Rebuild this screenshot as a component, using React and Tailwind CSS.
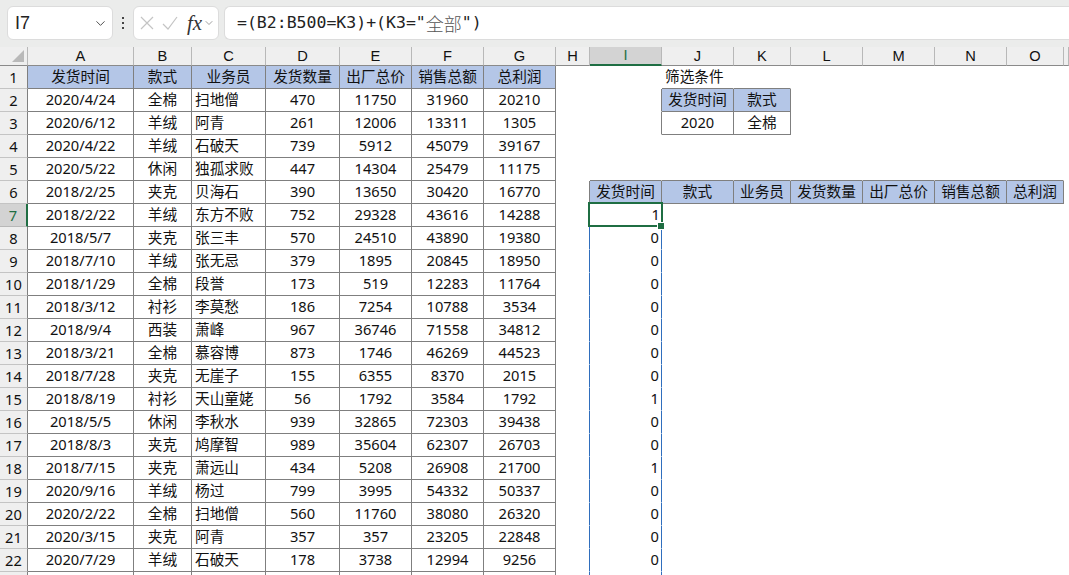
import React from 'react';
import { ChevronDown } from 'lucide-react';

const COLUMNS = ['A', 'B', 'C', 'D', 'E', 'F', 'G', 'H', 'I', 'J', 'K', 'L', 'M', 'N', 'O', ''];
const HEADERS = ['发货时间', '款式', '业务员', '发货数量', '出厂总价', '销售总额', '总利润'];

const ROWS = [
  ['2020/4/24', '全棉', '扫地僧', 470, 11750, 31960, 20210],
  ['2020/6/12', '羊绒', '阿青', 261, 12006, 13311, 1305],
  ['2020/4/22', '羊绒', '石破天', 739, 5912, 45079, 39167],
  ['2020/5/22', '休闲', '独孤求败', 447, 14304, 25479, 11175],
  ['2018/2/25', '夹克', '贝海石', 390, 13650, 30420, 16770],
  ['2018/2/22', '羊绒', '东方不败', 752, 29328, 43616, 14288],
  ['2018/5/7', '夹克', '张三丰', 570, 24510, 43890, 19380],
  ['2018/7/10', '羊绒', '张无忌', 379, 1895, 20845, 18950],
  ['2018/1/29', '全棉', '段誉', 173, 519, 12283, 11764],
  ['2018/3/12', '衬衫', '李莫愁', 186, 7254, 10788, 3534],
  ['2018/9/4', '西装', '萧峰', 967, 36746, 71558, 34812],
  ['2018/3/21', '全棉', '慕容博', 873, 1746, 46269, 44523],
  ['2018/7/28', '夹克', '无崖子', 155, 6355, 8370, 2015],
  ['2018/8/19', '衬衫', '天山童姥', 56, 1792, 3584, 1792],
  ['2018/5/5', '休闲', '李秋水', 939, 32865, 72303, 39438],
  ['2018/8/3', '夹克', '鸠摩智', 989, 35604, 62307, 26703],
  ['2018/7/15', '夹克', '萧远山', 434, 5208, 26908, 21700],
  ['2020/9/16', '羊绒', '杨过', 799, 3995, 54332, 50337],
  ['2020/2/22', '全棉', '扫地僧', 560, 11760, 38080, 26320],
  ['2020/3/15', '夹克', '阿青', 357, 357, 23205, 22848],
  ['2020/7/29', '羊绒', '石破天', 178, 3738, 12994, 9256],
];

// result of the array formula in column I, starting at row 7
const RESULTS = [1, 0, 0, 0, 0, 0, 0, 0, 1, 0, 0, 1, 0, 0, 0, 0];

const Cell = ({ children, right, bottom, fill, align = 'center' }) => {
  const alignClass = align === 'left' ? 'justify-start pl-[3px]' : align === 'right' ? 'justify-end pr-[2px]' : 'justify-center';
  return (
    <div
      className={`flex items-center whitespace-nowrap border-r border-b pb-[2px] ${alignClass} ${fill ? 'bg-[#b4c6e7]' : 'bg-white'} ${
        right === 'gray' ? 'border-r-[#7f7f7f]' : right === 'blue' ? 'border-r-[#2f6ebd]' : 'border-r-transparent'
      } ${bottom ? 'border-b-[#7f7f7f]' : 'border-b-transparent'}`}
    >
      {children}
    </div>
  );
};

// border and content of one sheet cell; row is 1-based, col 0 is A
const cellFor = (row, col) => {
  const props = {};
  if (col <= 6) {
    props.right = 'gray';
    props.bottom = true;
    if (row === 1) {
      props.fill = true;
      props.children = HEADERS[col];
    } else if (ROWS[row - 2]) {
      props.children = ROWS[row - 2][col];
      if (col === 2) props.align = 'left';
    }
    return props;
  }
  if (row === 1 && col === 9) {
    props.align = 'left';
    props.children = '筛选条件';
  }
  if (row === 1 && (col === 9 || col === 10)) props.bottom = true;
  if ((row === 2 || row === 3) && col === 8) props.right = 'gray';
  if ((row === 2 || row === 3) && (col === 9 || col === 10)) {
    props.right = 'gray';
    props.bottom = true;
    if (row === 2) {
      props.fill = true;
      props.children = col === 9 ? '发货时间' : '款式';
    } else {
      props.children = col === 9 ? 2020 : '全棉';
    }
  }
  if (row === 5 && col >= 8 && col <= 14) props.bottom = true;
  if (row === 6 && col === 7) props.right = 'gray';
  if (row === 6 && col >= 8 && col <= 14) {
    props.right = 'gray';
    props.bottom = true;
    props.fill = true;
    props.children = HEADERS[col - 8];
  }
  if (row >= 7 && (col === 7 || col === 8)) props.right = 'blue';
  if (row >= 7 && col === 8) {
    props.align = 'right';
    props.children = RESULTS[row - 7];
  }
  return props;
};

const FormulaBar = () => (
  <div className="flex h-[47px] shrink-0 items-start bg-[#ebeceb] pl-[7px] pt-[6px]">
    {/* Name box */}
    <div className="flex h-[34px] w-[106px] items-center justify-between rounded-[6px] border border-[#dcdcdc] bg-white pl-[7px] pr-[4px] font-['Liberation_Sans',sans-serif] text-[18px] text-[#222]">
      <span>I7</span>
      <ChevronDown size={15} strokeWidth={1.5} className="text-[#444]" />
    </div>
    <div className="flex h-[34px] w-[20px] flex-col items-center justify-center gap-[3px]">
      <span className="h-[2px] w-[2px] bg-[#444]" />
      <span className="h-[2px] w-[2px] bg-[#444]" />
      <span className="h-[2px] w-[2px] bg-[#444]" />
    </div>
    {/* Cancel, enter, function */}
    <div className="flex h-[34px] w-[86px] items-center rounded-[6px] border border-[#dcdcdc] bg-white pl-[6px]">
      <svg width="14" height="14" viewBox="0 0 14 14" fill="none" stroke="#c4c4c4" strokeWidth="1.2">
        <path d="M1 1l12 12M13 1L1 13" />
      </svg>
      <svg width="16" height="14" viewBox="0 0 16 14" fill="none" stroke="#c4c4c4" strokeWidth="1.2" className="ml-[8px]">
        <path d="M1 8l5 5L15 1" />
      </svg>
      <span className="ml-[9px] font-['Liberation_Serif',serif] text-[21px] italic leading-none text-[#333]">fx</span>
      <ChevronDown size={12} strokeWidth={1.4} className="ml-[1px] text-[#777]" />
    </div>
    {/* Formula */}
    <div className="ml-[5px] flex h-[34px] flex-1 items-center rounded-l-[6px] border border-r-0 border-[#dcdcdc] bg-white pl-[12px] font-['DejaVu_Sans_Mono','Noto_Sans_CJK_SC',monospace] text-[16.5px] text-[#222]">
      =(B2:B500=K3)+(K3="<span className="font-['Noto_Sans_CJK_SC',sans-serif] text-[18px] font-light text-[#555]">全部</span>")
    </div>
  </div>
);

export default function App() {
  const rowNumbers = Array.from({ length: 23 }, (_, i) => i + 1);

  return (
    <div className="flex h-screen flex-col overflow-hidden bg-white font-['Noto_Sans','Noto_Sans_CJK_SC',sans-serif] text-[14.67px] leading-none text-[#111]">
      <FormulaBar />

      {/* Sheet */}
      <div className="grid grid-cols-[28px_106px_58px_74px_74px_72px_72px_72px_34px_72px_72px_57px_72px_72px_72px_57px_1fr] grid-rows-[19px] auto-rows-[23px]">
        {/* Column headers */}
        <div className="flex items-end justify-end border-r border-b border-r-[#b8b8b8] border-b-[#8a8a8a] bg-[#efefef] pb-[3px] pr-[3px]">
          <svg width="12" height="12" viewBox="0 0 12 12">
            <path d="M12 0v12H0z" fill="#b9b9b9" />
          </svg>
        </div>
        {COLUMNS.map((col, i) =>
          col === 'I' ? (
            <div key={i} className="flex items-center justify-center border-r border-b-2 border-r-[#b8b8b8] border-b-[#1f6e43] bg-[#d3d3d3] font-['Liberation_Sans',sans-serif] text-[#1f6e43]">
              {col}
            </div>
          ) : (
            <div key={i} className="flex items-center justify-center border-r border-b border-r-[#b8b8b8] border-b-[#8a8a8a] bg-[#efefef] font-['Liberation_Sans',sans-serif]">
              {col}
            </div>
          )
        )}

        {rowNumbers.map((row) => (
          <React.Fragment key={row}>
            {row === 7 ? (
              <div className="flex items-center justify-center border-r-2 border-b border-r-[#1f6e43] border-b-[#b8b8b8] bg-[#d3d3d3] text-[#1f6e43]">{row}</div>
            ) : (
              <div className="flex items-center justify-center border-r border-b border-r-[#7f7f7f] border-b-[#c4c4c4] bg-[#efefef]">{row < 23 ? row : ''}</div>
            )}
            {COLUMNS.map((_, col) => {
              if (row === 7 && col === 8) {
                return (
                  <div key={col} className="relative flex items-center justify-end bg-white pb-[2px] pr-[2px]">
                    1
                    {/* active cell frame and fill handle */}
                    <span className="absolute -left-[2px] -top-[2px] -right-[1px] bottom-0 z-10 border-2 border-[#1f6e43]" />
                    <span className="absolute -bottom-[2px] -right-[2px] z-20 h-[6px] w-[6px] bg-[#1f6e43] outline outline-1 outline-white" />
                  </div>
                );
              }
              return <Cell key={col} {...cellFor(row, col)} />;
            })}
          </React.Fragment>
        ))}
      </div>
    </div>
  );
}
